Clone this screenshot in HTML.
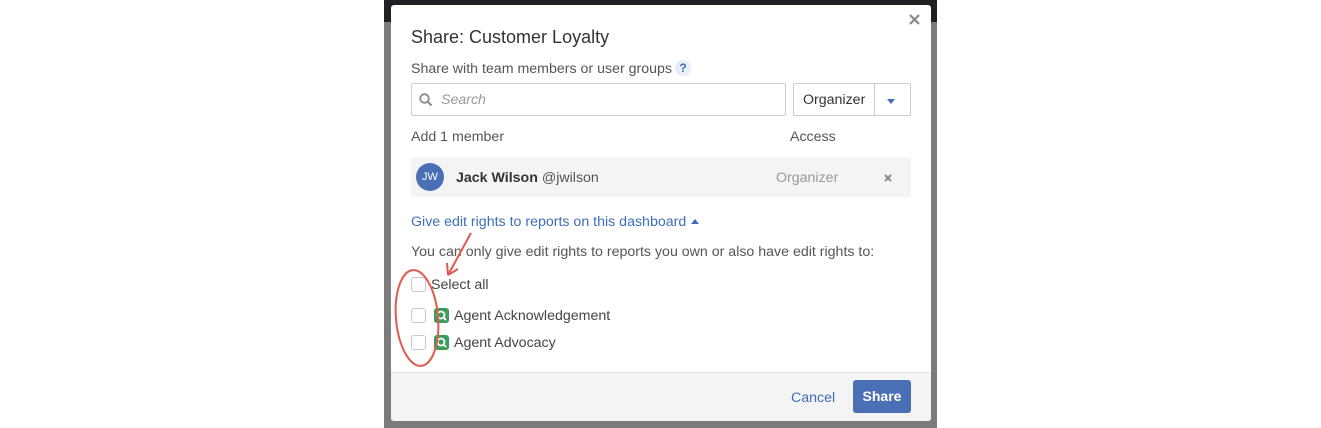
<!DOCTYPE html>
<html><head><style>
*{box-sizing:border-box;margin:0;padding:0}
body{width:1321px;height:428px;background:#fff;position:relative;overflow:hidden;font-family:"Liberation Sans",Arial,sans-serif;color:#333}
.ov{position:absolute;left:384px;top:0;width:553px;height:428px;background:#7b7b7b}
.top{position:absolute;left:384px;top:0;width:553px;height:22px;background:#1f2125}
.m{position:absolute;left:391px;top:5px;width:540px;height:416px;background:#fff;border-radius:3px;overflow:hidden}
.a{position:absolute;white-space:nowrap}
.foot{position:absolute;left:0;top:367px;width:540px;height:49px;background:#f4f4f4;border-top:1px solid #e2e2e2}
.cb{position:absolute;width:15px;height:15px;border:1px solid #c8c8c8;border-radius:3px;background:#fff}
.ic{position:absolute;width:15px;height:15px;background:#3d9c5a;border-radius:3px}
.t{font-size:14.2px}
</style></head><body>
<div class="ov"></div><div class="top"></div>
<div class="m">
<svg class="a" style="left:518px;top:9px" width="11" height="11"><path d="M1 1L10 10M10 1L1 10" stroke="#888" stroke-width="2.2"/></svg>
<div class="a" style="left:20px;top:22px;font-size:18px;color:#333">Share: Customer Loyalty</div>
<div class="a t" style="left:20px;top:56px;color:#555">Share with team members or user groups</div>
<div class="a" style="left:284px;top:55px;width:16px;height:16px;border-radius:50%;background:#e6eef8;color:#3e6eb8;font-size:12px;font-weight:bold;text-align:center;line-height:16px">?</div>
<div class="a" style="left:20px;top:78px;width:375px;height:33px;border:1px solid #ccc;border-radius:2px"></div>
<svg class="a" style="left:28px;top:88px" width="14" height="14" viewBox="0 0 14 14"><circle cx="5.5" cy="5.5" r="4.3" fill="none" stroke="#888" stroke-width="1.8"/><path d="M8.7 8.7L12.5 12.5" stroke="#888" stroke-width="2"/></svg>
<div class="a t" style="left:50px;top:87px;font-style:italic;color:#999">Search</div>
<div class="a" style="left:402px;top:78px;width:118px;height:33px;border:1px solid #ccc;border-radius:2px"></div>
<div class="a" style="left:483px;top:78px;width:1px;height:33px;background:#ccc"></div>
<div class="a t" style="left:412px;top:87px;color:#333">Organizer</div>
<div class="a" style="left:496px;top:94px;width:0;height:0;border-left:4px solid transparent;border-right:4px solid transparent;border-top:5px solid #3e6eb8"></div>
<div class="a t" style="left:20px;top:124px;color:#555">Add 1 member</div>
<div class="a t" style="left:399px;top:124px;color:#555">Access</div>
<div class="a" style="left:20px;top:152px;width:500px;height:40px;background:#f4f4f4;border-radius:2px"></div>
<div class="a" style="left:25px;top:158px;width:28px;height:28px;border-radius:50%;background:#4a6fb5;color:#fff;font-size:11px;text-align:center;line-height:28px">JW</div>
<div class="a t" style="left:65px;top:165px;color:#333"><b style="font-weight:600">Jack Wilson</b> <span style="color:#555">@jwilson</span></div>
<div class="a t" style="left:385px;top:165px;color:#999">Organizer</div>
<svg class="a" style="left:493px;top:169px" width="8" height="8"><path d="M1 1L7 7M7 1L1 7" stroke="#888" stroke-width="2"/></svg>
<div class="a t" style="left:20px;top:209px;color:#3e6eb8">Give edit rights to reports on this dashboard</div>
<div class="a" style="left:300px;top:214px;width:0;height:0;border-left:4px solid transparent;border-right:4px solid transparent;border-bottom:5px solid #3e6eb8"></div>
<div class="a t" style="left:20px;top:239px;color:#555">You can only give edit rights to reports you own or also have edit rights to:</div>
<div class="cb" style="left:20px;top:272px"></div>
<div class="a t" style="left:40px;top:272px;color:#444">Select all</div>
<div class="cb" style="left:20px;top:303px"></div>
<div class="ic" style="left:43px;top:303px"><svg width="15" height="15"><circle cx="7" cy="7" r="3.5" fill="none" stroke="#fff" stroke-width="1.8"/><path d="M9.5 9.5L12 12" stroke="#fff" stroke-width="1.8"/></svg></div>
<div class="a t" style="left:63px;top:303px;color:#444">Agent Acknowledgement</div>
<div class="cb" style="left:20px;top:330px"></div>
<div class="ic" style="left:43px;top:330px"><svg width="15" height="15"><circle cx="7" cy="7" r="3.5" fill="none" stroke="#fff" stroke-width="1.8"/><path d="M9.5 9.5L12 12" stroke="#fff" stroke-width="1.8"/></svg></div>
<div class="a t" style="left:63px;top:330px;color:#444">Agent Advocacy</div>
<svg class="a" style="left:0;top:220px" width="100" height="150"><ellipse cx="26" cy="93" rx="21" ry="48" fill="none" stroke="#e05a50" stroke-width="2" transform="rotate(-5 26 93)"/><path d="M80 8L57 50M57 50L56 38M57 50L67 44" fill="none" stroke="#e05a50" stroke-width="2"/></svg>
<div class="foot"></div>
<div class="a t" style="left:400px;top:385px;color:#3e6eb8">Cancel</div>
<div class="a" style="left:462px;top:375px;width:58px;height:33px;background:#4a6fb5;border-radius:3px;color:#fff;font-size:14px;font-weight:600;text-align:center;line-height:33px">Share</div>
</div>
</body></html>
